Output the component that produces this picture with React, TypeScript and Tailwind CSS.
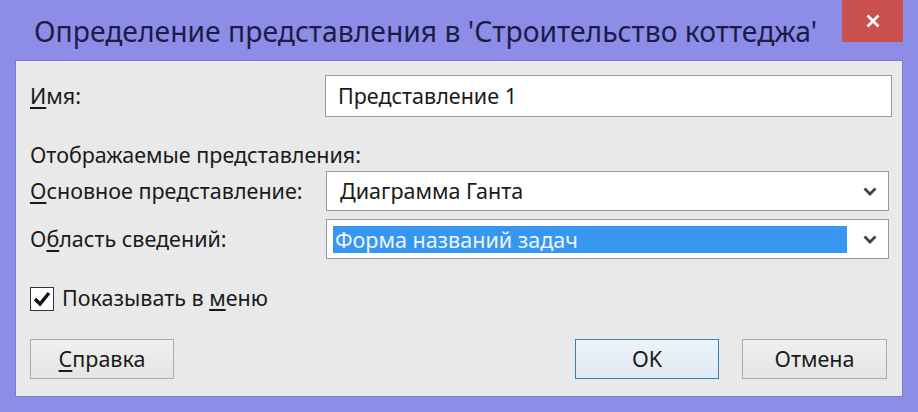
import React from "react";

const font = { fontFamily: '"Noto Sans", "Open Sans", sans-serif' };

function Chevron() {
    return (
        <svg width="14" height="9" viewBox="0 0 14 9" className="shrink-0">
            <polyline points="1.5,1.5 7,7 12.5,1.5" fill="none" stroke="#404040" strokeWidth="2.8" />
        </svg>
    );
}

function Mn({ children }: { children: React.ReactNode }) {
    return <span className="underline underline-offset-[3px] decoration-[1.5px]">{children}</span>;
}

export default function App() {
    return (
        <div
            className="w-[918px] h-[412px] bg-[#8d8de8] flex flex-col overflow-hidden"
            style={font}
        >
            {/* title bar */}
            <div className="h-[60px] flex items-start shrink-0">
                <div className="pl-[34px] pt-[13px] text-[28.3px] leading-[36px] text-[#1c1c48] whitespace-nowrap flex-1">
                    Определение представления в 'Строительство коттеджа'
                </div>
                <div className="w-[61px] h-[42px] mr-[15px] bg-[#c9504f] flex items-center justify-center">
                    <svg width="14" height="14" viewBox="0 0 14 14">
                        <line x1="1.5" y1="1.5" x2="12.5" y2="12.5" stroke="#fff" strokeWidth="2.6" />
                        <line x1="12.5" y1="1.5" x2="1.5" y2="12.5" stroke="#fff" strokeWidth="2.6" />
                    </svg>
                </div>
            </div>

            {/* client area */}
            <div className="flex-1 mx-[15px] mb-[15px] bg-[#e9e9e9] border border-[#7b7bd0] pl-[14px] pr-[10px] pt-[14px] text-[21.5px] text-[#1a1a1a] flex flex-col">
                <div className="flex items-center h-[42px]">
                    <div className="w-[295px]">
                        <Mn>И</Mn>мя:
                    </div>
                    <div className="flex-1 h-full bg-white border border-[#9a9a9a] flex items-center pl-[12px]">
                        Представление 1
                    </div>
                </div>

                <div className="mt-[24px] h-[28px] leading-[28px]">Отображаемые представления:</div>

                <div className="flex items-center h-[40px] mt-[2px] mr-[3px]">
                    <div className="w-[296px]">
                        <Mn>О</Mn>сновное представление:
                    </div>
                    <div className="flex-1 h-full bg-white border border-[#9a9a9a] flex items-center pl-[13px] pr-[11px]">
                        <span className="flex-1">Диаграмма Ганта</span>
                        <Chevron />
                    </div>
                </div>

                <div className="flex items-center h-[40px] mt-[8px] mr-[3px]">
                    <div className="w-[296px]">
                        О<Mn>б</Mn>ласть сведений:
                    </div>
                    <div className="flex-1 h-full bg-white border border-[#9a9a9a] flex items-center pl-[6px] pr-[11px]">
                        <span className="flex-1 mr-[16px] h-[27px] leading-[27px] bg-[#3797f0] text-[#eef4ff] pl-[2px]">
                            Форма названий задач
                        </span>
                        <Chevron />
                    </div>
                </div>

                <div className="flex items-center mt-[28px] h-[23px] gap-[8px]">
                    <div className="w-[24px] h-[24px] bg-white border border-[#333] flex items-center justify-center">
                        <svg width="18" height="16" viewBox="0 0 18 16">
                            <polyline points="2,8 7,13 16,2" fill="none" stroke="#111" strokeWidth="3.4" />
                        </svg>
                    </div>
                    <span>
                        Показывать в <Mn>м</Mn>еню
                    </span>
                </div>

                <div className="flex items-center mt-[29px] h-[40px] mr-[5px]">
                    <button className="w-[144px] h-full border border-[#acacac] bg-gradient-to-b from-[#f0f0f0] to-[#e5e5e5] text-[21.5px]">
                        <Mn>С</Mn>правка
                    </button>
                    <div className="flex-1" />
                    <button className="w-[144px] h-full border border-[#3c7fb1] bg-gradient-to-b from-[#ecf4fa] to-[#dfe9f2] text-[21.5px]">
                        OK
                    </button>
                    <button className="w-[145px] h-full ml-[23px] border border-[#acacac] bg-gradient-to-b from-[#f0f0f0] to-[#e5e5e5] text-[21.5px]">
                        Отмена
                    </button>
                </div>
            </div>
        </div>
    );
}
